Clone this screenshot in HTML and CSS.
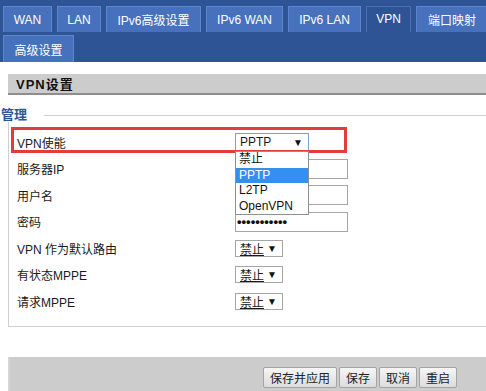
FILE: index.html
```html
<!DOCTYPE html>
<html lang="zh-CN">
<head>
<meta charset="utf-8">
<title>VPN设置</title>
<link rel="stylesheet" href="styles.css">
</head>
<body>
<div class="nav">
  <div class="tabrow">
    <div class="tab w-wan">WAN</div>
    <div class="tab w-lan">LAN</div>
    <div class="tab w-v6adv">IPv6高级设置</div>
    <div class="tab w-v6wan">IPv6 WAN</div>
    <div class="tab w-v6lan">IPv6 LAN</div>
    <div class="tab active w-vpn">VPN</div>
    <div class="tab w-port">端口映射</div>
  </div>
  <div class="tabrow">
    <div class="tab tall w-adv">高级设置</div>
  </div>
</div>

<div class="section-title">VPN设置</div>

<div class="legend-row">
  <span class="legend">管理</span>
  <span class="legend-line"></span>
</div>

<div class="group">
  <div class="annot"></div>
  <div class="row">
    <div class="label">VPN使能</div>
    <div class="select big focused">
      <span class="sel-text">PPTP</span><span class="arrow">▼</span>
      <div class="droplist">
        <div class="opt">禁止</div>
        <div class="opt sel">PPTP</div>
        <div class="opt">L2TP</div>
        <div class="opt">OpenVPN</div>
      </div>
    </div>
  </div>
  <div class="row">
    <div class="label">服务器IP</div>
    <div class="textbox"></div>
  </div>
  <div class="row">
    <div class="label">用户名</div>
    <div class="textbox"></div>
  </div>
  <div class="row">
    <div class="label">密码</div>
    <div class="textbox dots">•••••••••••</div>
  </div>
  <div class="row">
    <div class="label">VPN 作为默认路由</div>
    <div class="select small"><span class="sel-text u">禁止</span><span class="arrow">▼</span></div>
  </div>
  <div class="row">
    <div class="label">有状态MPPE</div>
    <div class="select small"><span class="sel-text u">禁止</span><span class="arrow">▼</span></div>
  </div>
  <div class="row">
    <div class="label">请求MPPE</div>
    <div class="select small"><span class="sel-text u">禁止</span><span class="arrow">▼</span></div>
  </div>
</div>

<div class="buttonbar">
  <button class="btn">保存并应用</button>
  <button class="btn">保存</button>
  <button class="btn">取消</button>
  <button class="btn">重启</button>
</div>
</body>
</html>
```

FILE: styles.css
```css
* { box-sizing: border-box; }
html, body {
  margin: 0;
  padding: 0;
  background: #ffffff;
  overflow: hidden;
}
body {
  font-family: "Liberation Sans", "Noto Sans CJK SC", sans-serif;
  font-size: 12px;
  color: #1a1a1a;
  width: 486px;
}

/* top navigation */
.nav {
  background: #2f5496;
  height: 62px;
  padding: 6px 0 0 3px;
  display: flex;
  flex-direction: column;
  gap: 3px;
  overflow: hidden;
}
.tabrow {
  display: flex;
  gap: 5px;
  flex-wrap: nowrap;
}
.tab {
  flex: none;
  height: 26px;
  background: #4771bc;
  border: 1px solid #5b86d0;
  border-bottom: none;
  color: #ffffff;
  display: flex;
  align-items: center;
  justify-content: center;
  white-space: nowrap;
  font-size: 12px;
}
.tab.tall { height: 27px; }
.tab.active {
  background: #2f5496;
  border-color: #4a6fb3;
  align-items: flex-start;
  padding-top: 5px;
}
.w-wan { width: 49px; }
.w-lan { width: 44px; }
.w-v6adv { width: 95px; }
.w-v6wan { width: 77px; }
.w-v6lan { width: 73px; }
.w-vpn { width: 45px; }
.w-port { width: 72px; }
.w-adv { width: 71px; }

/* section header */
.section-title {
  margin: 12px 0 0 8px;
  height: 21px;
  background: #cccccc;
  border-bottom: 2px solid #8e8e8e;
  padding-left: 8px;
  font-weight: bold;
  font-size: 13px;
  letter-spacing: 1px;
  color: #111;
  display: flex;
  align-items: center;
}

/* legend */
.legend-row {
  margin-top: 13px;
  height: 14px;
  display: flex;
  align-items: center;
}
.legend {
  color: #2d5597;
  font-size: 13px;
  font-weight: bold;
  padding-left: 1px;
  line-height: 14px;
}
.legend-line {
  flex: 1;
  margin-left: 17px;
  border-top: 1px solid #cfcfcf;
}

/* group body */
.group {
  position: relative;
  margin-left: 8px;
  border-left: 1px solid #cfcfcf;
  border-bottom: 1px solid #cfcfcf;
  padding: 7px 0 11px 0;
}
.annot {
  position: absolute;
  left: 2px;
  top: 5px;
  width: 336px;
  height: 26px;
  border: 3px solid #e23c3c;
  z-index: 1;
  pointer-events: none;
}
.row {
  height: 26.5px;
  display: flex;
  align-items: center;
}
.label {
  width: 226px;
  padding-left: 8px;
  white-space: nowrap;
}

.textbox {
  width: 113px;
  height: 20px;
  border: 1px solid #a6a6a6;
  background: #fff;
}
.textbox.dots {
  font-size: 13px;
  font-weight: bold;
  padding-left: 1px;
  line-height: 18px;
  color: #111;
}

.select {
  position: relative;
  display: flex;
  align-items: center;
  background: #fff;
  border: 1px solid #a6a6a6;
  padding-left: 4px;
}
.select.big {
  width: 74px;
  height: 18px;
}
.select.focused { border-color: #7b9ed6; }
.select.small {
  width: 48px;
  height: 17px;
}
.sel-text { flex: 1; }
.sel-text.u { text-decoration: underline; }
.arrow {
  font-size: 10px;
  width: 15px;
  color: #111;
}
.droplist {
  position: absolute;
  left: -1px;
  top: 17px;
  width: 74px;
  background: #fff;
  border: 1px solid #8f8f8f;
  z-index: 2;
}
.opt {
  height: 15.5px;
  line-height: 15.5px;
  padding-left: 3px;
  color: #111;
}
.opt.sel {
  background: #3390f0;
  color: #fff;
}

/* bottom button bar */
.buttonbar {
  margin: 30px 0 0 8px;
  height: 40px;
  background: #cccccc;
  border-left: 2px solid #d6d6d6;
  padding: 10px 29px 0 0;
  display: flex;
  justify-content: flex-end;
  align-items: flex-start;
  gap: 2px;
}
.btn {
  height: 21px;
  padding: 0 6px;
  font-family: "Liberation Sans", "Noto Sans CJK SC", sans-serif;
  font-size: 12px;
  color: #222;
  background: linear-gradient(#f6f6f6, #dcdcdc);
  border: 1px solid #a4a4a4;
  border-radius: 2px;
}
```
